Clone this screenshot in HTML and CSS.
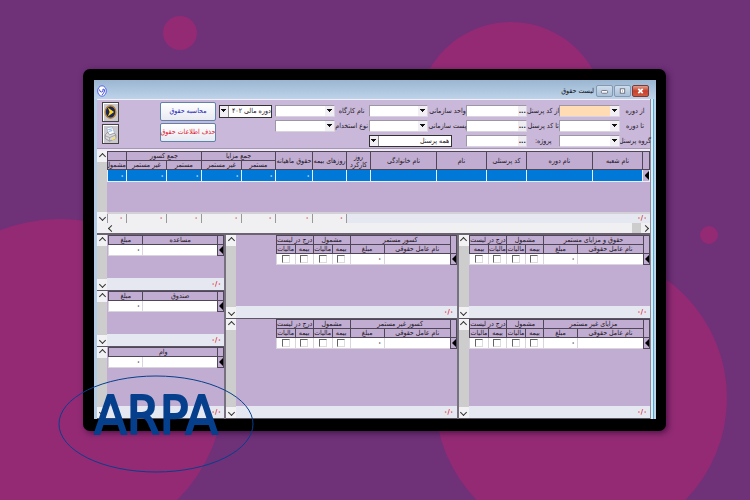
FILE: index.html
```html
<!DOCTYPE html>
<html lang="fa" dir="rtl">
<head>
<meta charset="utf-8">
<meta name="viewport" content="width=device-width, initial-scale=1">
<title>لیست حقوق</title>
<link rel="stylesheet" href="styles.css">
</head>
<body>
<svg class="backdrop" viewBox="0 0 750 500" preserveAspectRatio="xMidYMid slice" aria-hidden="true">
  <circle cx="180" cy="33" r="17"/><circle cx="511" cy="116" r="94"/><circle cx="60" cy="384" r="165"/>
  <circle cx="581" cy="398" r="146"/><circle cx="709" cy="235" r="9"/>
</svg>
<main class="monitor">
 <div class="window">
  <header class="titlebar">
    <button class="win close" aria-label="بستن"><svg viewBox="0 0 17 11"><path d="M6 3l5 5M11 3l-5 5" stroke="#fff" stroke-width="2"/></svg></button>
    <button class="win" aria-label="بزرگ"><svg viewBox="0 0 17 11"><rect x="6" y="3" width="5" height="5" fill="#fff" stroke="#667" /><path d="M8 5.500h1" stroke="#667"/></svg></button>
    <button class="win" aria-label="کوچک"><svg viewBox="0 0 17 11"><rect x="5" y="5" width="7" height="3" rx="1" fill="#fff" stroke="#667"/></svg></button>
    <h1>لیست حقوق</h1>
    <svg class="app-icon" viewBox="0 0 10 12"><ellipse cx="5" cy="6" rx="4.300" ry="5.200" fill="#fff" stroke="#5560e8"/><path d="M2.500 4.500q0 2.500 2 2.500t1.500-3q2 0 1.500 2t-2.500 4" fill="none" stroke="#4450e0"/></svg>
  </header>

  <form class="filters">
    <div class="fields">
      <label for="f1">از دوره</label><span class="combo active"><select id="f1"><option></option></select></span>
      <label for="f2">از کد پرسنل</label><span class="lookup"><input id="f2"><button type="button" aria-label="جستجو">...</button></span>
      <label for="f3">واحد سازمانی</label><span class="combo"><select id="f3"><option></option></select></span>
      <label for="f4">نام کارگاه</label><span class="combo"><select id="f4"><option></option></select></span>

      <label for="f5">تا دوره</label><span class="combo"><select id="f5"><option></option></select></span>
      <label for="f6">تا کد پرسنل</label><span class="lookup"><input id="f6"><button type="button" aria-label="جستجو">...</button></span>
      <label for="f7">پست سازمانی</label><span class="combo"><select id="f7"><option></option></select></span>
      <label for="f8">نوع استخدام</label><span class="combo"><select id="f8"><option></option></select></span>

      <label for="f9">گروه پرسنل</label><span class="combo"><select id="f9"><option></option></select></span>
      <label for="f10">پروژه:</label><span class="lookup"><input id="f10"><button type="button" aria-label="جستجو">...</button></span>
      <span class="combo boxed people"><select aria-label="پرسنل"><option>همه پرسنل</option></select></span>
    </div>
    <span class="combo boxed period"><select aria-label="دوره مالی"><option>دوره مالی ۴۰۲</option></select></span>
    <div class="actions">
      <button type="button" class="calc">محاسبه حقوق</button>
      <button type="button" class="erase">حذف اطلاعات حقوق</button>
    </div>
    <div class="tools">
      <button type="button" aria-label="اجرا"><svg viewBox="0 0 14 18"><ellipse cx="7" cy="9" rx="6" ry="7" fill="#17245f" stroke="#b8862c" stroke-width="1.500"/><path d="M4 4l7 5-7 5 2-5z" fill="#ffd51e"/></svg></button>
      <button type="button" aria-label="چاپ"><svg viewBox="0 0 14 18"><path d="M3 2l6-1 3 8-7 2z" fill="#fff" stroke="#9aa6b8" stroke-width=".7"/><path d="M4.500 4l4-.7M5 6l4-.8" stroke="#6fa6e0"/><path d="M1 10l3-3 2 3 5-2 2 2v4l-7 3-5-3z" fill="#d8dade" stroke="#777" stroke-width=".7"/><path d="M1 11l5 2 7-3M6 13v4" fill="none" stroke="#888" stroke-width=".7"/><path d="M8 14l4-2 1 2-4 2z" fill="#f3e36e"/></svg></button>
    </div>
  </form>

  <section class="payroll">
    <div class="grid-row">
      <div class="sheet">
        <table class="main">
          <colgroup><col class="w7"><col class="w50"><col class="w66"><col class="w40"><col class="w50"><col class="w66"><col class="w24"><col class="w34"><col class="w37"><col class="w34"><col class="w40"><col class="w35"><col class="w40"><col class="w19"></colgroup>
          <thead>
            <tr><th rowspan="2"></th><th rowspan="2">نام شعبه</th><th rowspan="2">نام دوره</th><th rowspan="2">کد پرسنلی</th><th rowspan="2">نام</th><th rowspan="2">نام خانوادگی</th><th rowspan="2" class="two">روز<br>کارکرد</th><th rowspan="2">روزهای بیمه</th><th rowspan="2">حقوق ماهیانه</th><th colspan="2">جمع مزایا</th><th colspan="2">جمع کسور</th><th></th></tr>
            <tr><th>مستمر</th><th>غیر مستمر</th><th>مستمر</th><th>غیر مستمر</th><th>مشمول</th></tr>
          </thead>
          <tbody><tr><td class="mark"></td><td></td><td></td><td></td><td></td><td></td><td></td><td></td><td>۰</td><td>۰</td><td>۰</td><td>۰</td><td>۰</td><td>۰</td></tr></tbody>
        </table>
        <table class="totals">
          <colgroup><col class="w303"><col class="w34"><col class="w37"><col class="w34"><col class="w40"><col class="w35"><col class="w40"><col class="w19"></colgroup>
          <tbody><tr><td class="count">۰/۰</td><td>۰</td><td>۰</td><td>۰</td><td>۰</td><td>۰</td><td>۰</td><td>۰</td></tr></tbody>
        </table>
      </div>
      <div class="vbar plain"><i class="up"></i><i class="down"></i></div>
    </div>
    <div class="hbar"><i class="next"></i><b></b><i class="prev"></i></div>
  </section>

  <section class="details">
    <div class="stack">
      <article class="pane tall">
        <div class="sheet">
          <table class="factor"><colgroup><col class="w6"><col class="w66"><col class="w34"><col class="w18"><col class="w19"><col class="w18"><col class="w19"></colgroup>
            <thead><tr><th rowspan="2"></th><th colspan="2">حقوق و مزایای مستمر</th><th colspan="2">مشمول</th><th colspan="2">درج در لیست</th></tr>
            <tr><th>نام عامل حقوقی</th><th>مبلغ</th><th>بیمه</th><th>مالیات</th><th>مالیات</th><th>بیمه</th></tr></thead>
            <tbody><tr><td class="mark"></td><td></td><td>۰</td><td><input type="checkbox" aria-label="بیمه"></td><td><input type="checkbox" aria-label="مالیات"></td><td><input type="checkbox" aria-label="مالیات"></td><td><input type="checkbox" aria-label="بیمه"></td></tr></tbody></table>
          <footer>۰/۰</footer>
        </div>
        <div class="vbar"><i class="up"></i><i class="down"></i></div>
      </article>
      <article class="pane last">
        <div class="sheet">
          <table class="factor"><colgroup><col class="w6"><col class="w66"><col class="w34"><col class="w18"><col class="w19"><col class="w18"><col class="w19"></colgroup>
            <thead><tr><th rowspan="2"></th><th colspan="2">مزایای غیر مستمر</th><th colspan="2">مشمول</th><th colspan="2">درج در لیست</th></tr>
            <tr><th>نام عامل حقوقی</th><th>مبلغ</th><th>بیمه</th><th>مالیات</th><th>بیمه</th><th>مالیات</th></tr></thead>
            <tbody><tr><td class="mark"></td><td></td><td>۰</td><td><input type="checkbox" aria-label="بیمه"></td><td><input type="checkbox" aria-label="مالیات"></td><td><input type="checkbox" aria-label="بیمه"></td><td><input type="checkbox" aria-label="مالیات"></td></tr></tbody></table>
          <footer>۰/۰</footer>
        </div>
        <div class="vbar"><i class="up"></i><i class="down"></i></div>
      </article>
    </div>
    <div class="stack">
      <article class="pane tall">
        <div class="sheet">
          <table class="factor"><colgroup><col class="w6"><col class="w66"><col class="w34"><col class="w18"><col class="w19"><col class="w18"><col class="w19"></colgroup>
            <thead><tr><th rowspan="2"></th><th colspan="2">کسور مستمر</th><th colspan="2">مشمول</th><th colspan="2">درج در لیست</th></tr>
            <tr><th>نام عامل حقوقی</th><th>مبلغ</th><th>بیمه</th><th>مالیات</th><th>بیمه</th><th>مالیات</th></tr></thead>
            <tbody><tr><td class="mark"></td><td></td><td>۰</td><td><input type="checkbox" aria-label="بیمه"></td><td><input type="checkbox" aria-label="مالیات"></td><td><input type="checkbox" aria-label="بیمه"></td><td><input type="checkbox" aria-label="مالیات"></td></tr></tbody></table>
          <footer>۰/۰</footer>
        </div>
        <div class="vbar"><i class="up"></i><i class="down"></i></div>
      </article>
      <article class="pane last">
        <div class="sheet">
          <table class="factor"><colgroup><col class="w6"><col class="w66"><col class="w34"><col class="w18"><col class="w19"><col class="w18"><col class="w19"></colgroup>
            <thead><tr><th rowspan="2"></th><th colspan="2">کسور غیر مستمر</th><th colspan="2">مشمول</th><th colspan="2">درج در لیست</th></tr>
            <tr><th>نام عامل حقوقی</th><th>مبلغ</th><th>بیمه</th><th>مالیات</th><th>بیمه</th><th>مالیات</th></tr></thead>
            <tbody><tr><td class="mark"></td><td></td><td>۰</td><td><input type="checkbox" aria-label="بیمه"></td><td><input type="checkbox" aria-label="مالیات"></td><td><input type="checkbox" aria-label="بیمه"></td><td><input type="checkbox" aria-label="مالیات"></td></tr></tbody></table>
          <footer>۰/۰</footer>
        </div>
        <div class="vbar"><i class="up"></i><i class="down"></i></div>
      </article>
    </div>
    <div class="stack">
      <article class="pane short">
        <div class="sheet">
          <table class="loan"><colgroup><col class="w6"><col class="w75"><col class="w34"></colgroup>
            <thead><tr><th></th><th>مساعده</th><th>مبلغ</th></tr></thead>
            <tbody><tr><td class="mark"></td><td></td><td>۰</td></tr></tbody></table>
          <footer>۰/۰</footer>
        </div>
        <div class="vbar"><i class="up"></i><i class="down"></i></div>
      </article>
      <article class="pane short">
        <div class="sheet">
          <table class="loan"><colgroup><col class="w6"><col class="w75"><col class="w34"></colgroup>
            <thead><tr><th></th><th>صندوق</th><th>مبلغ</th></tr></thead>
            <tbody><tr><td class="mark"></td><td></td><td>۰</td></tr></tbody></table>
          <footer>۰/۰</footer>
        </div>
        <div class="vbar"><i class="up"></i><i class="down"></i></div>
      </article>
      <article class="pane last">
        <div class="sheet">
          <table class="loan"><colgroup><col class="w6"><col class="w75"><col class="w34"></colgroup>
            <thead><tr><th></th><th colspan="2">وام</th></tr></thead>
            <tbody><tr><td class="mark"></td><td></td><td>۰</td></tr></tbody></table>
          <footer>۰/۰</footer>
        </div>
        <div class="vbar"><i class="up"></i><i class="down"></i></div>
      </article>
    </div>
  </section>
 </div>
 <svg class="brand" viewBox="0 0 196 100" role="img" aria-label="ARPA" direction="ltr">
   <ellipse cx="98" cy="50" rx="97" ry="48" fill="none" stroke="#063f8c"/>
   <text x="98" y="60" text-anchor="middle">ARPA</text>
 </svg>
</main>
</body>
</html>
```
FILE: styles.css
```css
* { box-sizing: border-box; }
body {
  margin: 0;
  min-height: 100vh;
  display: flex;
  padding: 69px 84px;
  background: #6f3178;
  font: 7px/9px "DejaVu Sans Condensed", "DejaVu Sans", sans-serif;
  color: #1c1626;
}
button, input, select { font: inherit; color: inherit; margin: 0; padding: 0; border: 0; border-radius: 0; min-width: 0; }

.backdrop { position: fixed; inset: 0; width: 100%; height: 100%; z-index: -1; fill: #942a74; }

.monitor {
  position: relative;
  flex: 1;
  display: flex;
  padding: 11px 10px 12px 11px;
  background: #000;
  border-radius: 7px;
  box-shadow: 2px 2px 6px rgba(30, 0, 40, .6);
}
.window {
  flex: 1;
  min-width: 0;
  display: flex;
  flex-direction: column;
  padding: 0 6px 0 3px;
  background: linear-gradient(to right, #b4cde6 0 3px, #b4cde6 calc(100% - 6px), #8b8b95 calc(100% - 6px) calc(100% - 5px), #dcebf5 calc(100% - 5px) calc(100% - 3px), #4fa8d8 calc(100% - 3px) calc(100% - 2px), #b9d6ea calc(100% - 2px));
}

/* title bar */
.titlebar {
  display: flex;
  align-items: center;
  gap: 1px;
  height: 19px;
  padding: 3px 7px 0 3px;
  margin: 0 -6px 0 -3px;
  background: linear-gradient(#9bb6d1, #bdd3ea);
}
.titlebar h1 { margin: 0 1px 0 auto; font-size: 7px; line-height: 12px; font-weight: 400; color: #111; }
.win { width: 17px; height: 12px; border: 1px solid #8498b0; border-radius: 2px; background: linear-gradient(#cfdded, #a9c0d8); display: flex; }
.win svg { width: 100%; height: 100%; }
.win.close { background: linear-gradient(#e0a090, #c8402c 50%, #d05a40); border-color: #7c3a38; }
.app-icon { width: 10px; height: 12px; }

/* filter panel */
.filters {
  display: flex;
  align-items: flex-start;
  height: 52px;
  padding: 5px 0 0 5px;
  background: #c9b8d9;
  border-top: 1px solid #f4eefa;
  border-bottom: 2px solid #f0eaf6;
  box-shadow: inset 0 -1px #a597b4;
}
.fields {
  flex: 376 1 0;
  display: grid;
  grid-template-columns: 30fr 61fr 32fr 61fr 38fr 60fr 34fr 60fr;
  grid-auto-rows: 12px;
  row-gap: 3px;
}
.fields label { white-space: nowrap; line-height: 12px; display: flex; justify-content: center; min-width: 0; }
.combo, .lookup { display: flex; min-width: 0; background: #fff; border: 1px solid #9d97a5; border-right-color: #d8d3de; border-bottom-color: #d8d3de; }
.combo select { flex: 1; width: 0; appearance: none; background: transparent; line-height: 10px; }
.combo::before { content: ""; width: 9px; background: linear-gradient(#111, #111) center 3px / 5px 1px no-repeat, linear-gradient(#111, #111) center 4px / 3px 1px no-repeat, linear-gradient(#111, #111) center 5px / 1px 1px no-repeat, #f1eff3; }
.combo.active { background: #ffdcb4; }
.combo.boxed { border: 1px solid #333; flex-direction: row-reverse; }
.combo.boxed::before { width: 8px; border-right: 1px solid #888; }
.people { grid-column: 5 / 7; margin-right: 14px; }
.people select { padding-right: 2px; }
.lookup { direction: ltr; }
.lookup input { flex: 1; width: 0; background: #fff; }
.lookup button { width: 8px; background: #eeebf1; line-height: 6px; font-weight: 700; }
.period { flex: 51 1 0; height: 13px; margin-right: 3px; }
.period select { line-height: 11px; }
.actions { flex: 56 1 0; margin: -3px 3px 0 0; display: grid; gap: 2px; }
.actions button { height: 19px; border: 1px solid #5f83a8; border-radius: 2px; background: linear-gradient(#fff, #e8eaf2); white-space: nowrap; display: flex; align-items: center; justify-content: center; }
.actions .calc { color: #1f1fb8; }
.actions .erase { color: #e02030; }
.tools { margin: -3px 41px 0 0; display: grid; gap: 2px; }
.tools button { width: 17px; height: 20px; border: 1px solid #444; background: #ccc8d0; box-shadow: inset 1px 1px #fff; display: flex; padding: 1px; }
.tools svg { width: 100%; height: 100%; }

/* grids */
table { border-collapse: collapse; table-layout: fixed; }
th, td { padding: 0; font-weight: 400; overflow: hidden; white-space: nowrap; text-align: center; }
.w6 { width: 6px; } .w7 { width: 7px; } .w18 { width: 18px; } .w19 { width: 19px; } .w24 { width: 24px; }
.w34 { width: 34px; } .w35 { width: 35px; } .w37 { width: 37px; } .w40 { width: 40px; } .w50 { width: 50px; }
.w66 { width: 66px; } .w75 { width: 75px; } .w303 { width: 303px; }
th { height: 9px; line-height: 8px; border: 1px solid #4f4758; }
.sheet { flex: 1; min-width: 0; display: flex; flex-direction: column; background: #c1add1; }
.mark { position: relative; background: #c1add1; border: 1px solid #4f4758; }
.mark::after { content: ""; position: absolute; inset: 1px 0 1px auto; border: 4px solid transparent; border-right: 4px solid #000; border-left: 0; }

.payroll { border-bottom: 2px solid #6b6372; }
.grid-row { display: flex; height: 72px; }
.main { width: 100%; }
.main td { height: 12px; line-height: 10px; border: 1px solid #e6effa; border-top: 0; background: #0078d7; color: #fff; font-weight: 700; text-align: right; padding-right: 2px; }
.main .mark { background: #c1add1; }
.totals { width: 100%; margin-top: auto; border-top: 2px solid #d4d0d8; background: #e6e8f1; }
.totals td { height: 10px; line-height: 9px; background: #f0eff1; border-left: 1px solid #999; color: #d03030; font-weight: 700; text-align: right; padding-right: 3px; }
.totals .count { background: #e6e8f1; }

.vbar { width: 10px; display: flex; flex-direction: column; justify-content: space-between; background: #cdcdcd; }
.vbar i { height: 11px; background: #f2f1f3; display: grid; place-items: center; }
.vbar i::before, .hbar i::before { content: ""; width: 4px; height: 4px; border: solid #333; border-width: 1px 0 0 1px; transform: rotate(45deg); }
.vbar .down::before { transform: rotate(225deg); }
.hbar { height: 10px; display: flex; background: #f0eff1; padding-left: 10px; }
.hbar i { width: 9px; display: grid; place-items: center; }
.hbar .next::before { transform: rotate(135deg); }
.hbar .prev::before { transform: rotate(-45deg); }
.hbar b { width: 9px; margin: 0 0 0 auto; background: #cdcdcd; }

.details { flex: 1; display: grid; grid-template-columns: 191fr 232fr 129fr; }
.stack { display: flex; flex-direction: column; min-width: 0; }
.stack + .stack { border-right: 2px solid #77707e; }
.pane { display: flex; border-bottom: 1px solid #5c5564; }
.pane.tall { height: 84px; }
.pane.short { height: 56px; }
.pane.last { flex: 1; min-height: 72px; }
.factor { width: 180px; }
.loan { width: 115px; }
.pane td { height: 11px; line-height: 9px; background: #fff; border: 1px solid #d9d4de; font-weight: 700; text-align: right; padding-right: 2px; }
.pane td:has(input) { padding: 0; text-align: center; }
.pane .mark { background: #c1add1; border-color: #4f4758; }
.pane footer { margin-top: auto; height: 12px; padding-right: 3px; line-height: 12px; font-weight: 700; background: #e6e8f1; color: #e02030; }
input[type="checkbox"] { appearance: none; display: block; width: 8px; height: 8px; margin: 0 auto; border: 1px solid #ddd; border-top-color: #666; border-left-color: #666; background: #fff; }

/* brand mark over the corner of the monitor */
.brand { position: absolute; left: -25px; bottom: -43px; width: 196px; height: 100px; }
.brand text { font: 400 53px "DejaVu Sans Condensed", sans-serif; fill: #063f8c; stroke: #063f8c; stroke-width: 2px; stroke-linejoin: round; }
```
